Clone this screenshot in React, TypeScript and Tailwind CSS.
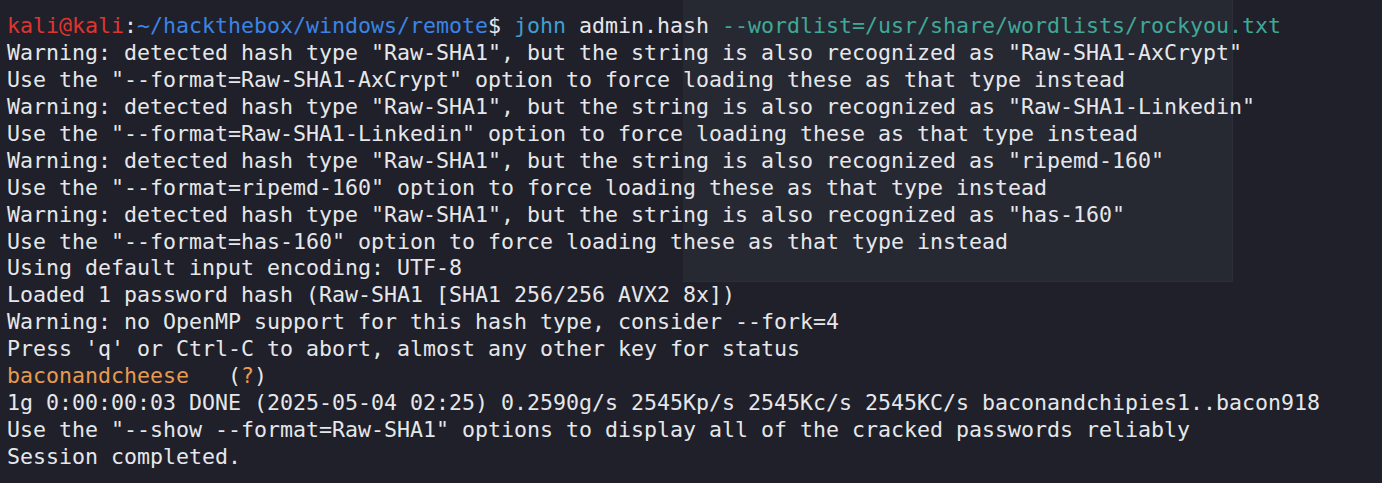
import React from "react";

const W = "text-[#e6e7ea]";

const lines: string[] = [
  'Warning: detected hash type "Raw-SHA1", but the string is also recognized as "Raw-SHA1-AxCrypt"',
  'Use the "--format=Raw-SHA1-AxCrypt" option to force loading these as that type instead',
  'Warning: detected hash type "Raw-SHA1", but the string is also recognized as "Raw-SHA1-Linkedin"',
  'Use the "--format=Raw-SHA1-Linkedin" option to force loading these as that type instead',
  'Warning: detected hash type "Raw-SHA1", but the string is also recognized as "ripemd-160"',
  'Use the "--format=ripemd-160" option to force loading these as that type instead',
  'Warning: detected hash type "Raw-SHA1", but the string is also recognized as "has-160"',
  'Use the "--format=has-160" option to force loading these as that type instead',
  "Using default input encoding: UTF-8",
  "Loaded 1 password hash (Raw-SHA1 [SHA1 256/256 AVX2 8x])",
  "Warning: no OpenMP support for this hash type, consider --fork=4",
  "Press 'q' or Ctrl-C to abort, almost any other key for status",
];

export default function App() {
  return (
    <div className="relative w-[1382px] h-[483px] overflow-hidden bg-[#1f2029]">
      <div className="absolute left-[683px] top-0 w-[550px] h-[282px] bg-[#262832] border-r border-b border-[#2b2d37]" />
      <div
        className="relative pl-[7px] pt-[13px] whitespace-pre text-[21.6px] leading-[26.94px] font-['DejaVu_Sans_Mono',monospace]"
      >
        <div>
          <span className="text-[#e0342f]">kali@kali</span>
          <span className={W}>:</span>
          <span className="text-[#3a84e6]">~/hackthebox/windows/remote</span>
          <span className={W}>$ </span>
          <span className="text-[#3f9fd2]">john</span>
          <span className={W}> admin.hash </span>
          <span className="text-[#3fa898]">--wordlist=/usr/share/wordlists/rockyou.txt</span>
        </div>
        {lines.map((l, i) => (
          <div key={i} className={W}>
            {l}
          </div>
        ))}
        <div>
          <span className="text-[#e89a4f]">baconandcheese</span>
          <span className={W}>   (</span>
          <span className="text-[#e89a4f]">?</span>
          <span className={W}>)</span>
        </div>
        <div className={W}>
          1g 0:00:00:03 DONE (2025-05-04 02:25) 0.2590g/s 2545Kp/s 2545Kc/s 2545KC/s baconandchipies1..bacon918
        </div>
        <div className={W}>
          Use the "--show --format=Raw-SHA1" options to display all of the cracked passwords reliably
        </div>
        <div className={W}>Session completed.</div>
      </div>
    </div>
  );
}
